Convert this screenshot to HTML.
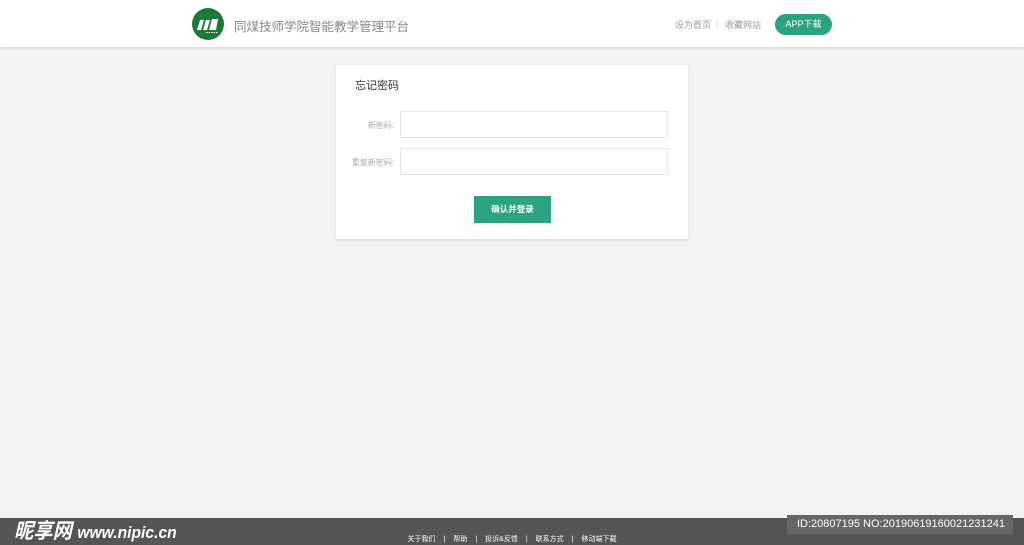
<!DOCTYPE html>
<html><head><meta charset="utf-8"><style>
*{margin:0;padding:0;box-sizing:border-box}
body{width:1024px;height:545px;background:#f2f2f2;font-family:"Liberation Sans","Noto Sans CJK SC",sans-serif;position:relative;overflow:hidden}
.hd{position:absolute;left:0;top:0;width:1024px;height:47px;background:#fff;box-shadow:0 1px 3px rgba(0,0,0,.12)}
.logo{position:absolute;left:192px;top:8px;width:32px;height:32px;border-radius:50%;background:#1d7a35}
.title{position:absolute;left:234px;top:16px;font-size:12.5px;color:#888}
.nav{position:absolute;top:18px;font-size:9px;color:#999}
.btn-app{position:absolute;left:775px;top:14px;width:57px;height:21px;border-radius:11px;background:#2ba383;color:#fff;font-size:9px;text-align:center;line-height:21px}
.card{position:absolute;left:336px;top:65px;width:352px;height:174px;background:#fff;box-shadow:0 1px 3px rgba(0,0,0,.1)}
.card h3{position:absolute;left:19px;top:12px;font-size:11px;font-weight:normal;color:#333}
.lbl{position:absolute;font-size:8px;color:#aaa;text-align:right;width:58px;left:0}
.inp{position:absolute;left:64px;width:268px;height:27px;border:1px solid #e6e6e6}
.sub{position:absolute;left:138px;top:131px;width:77px;height:27px;background:#2ba383;color:#fff;font-size:8.5px;text-align:center;line-height:27px;font-weight:bold}
.ft{position:absolute;left:0;top:518px;width:1024px;height:27px;background:#555}
.fl{position:absolute;left:0;width:1024px;top:534px;text-align:center;font-size:7px;color:#fff;word-spacing:0}
.fl span{margin:0 8px}
</style></head><body>
<div class="hd">
<div class="logo"><svg width="32" height="32" viewBox="0 0 32 32"><path d="M5 22l3-10h4l-3 10zM11 22l3-10h4l-3 10zM17 22l3-11h6l-2 11z" fill="#fff"/><path d="M14 24.5h12" stroke="#fff" stroke-width="1" stroke-dasharray="1.5 1"/></svg></div>
<div class="title">同煤技师学院智能教学管理平台</div>
<div class="nav" style="left:675px">设为首页</div>
<div class="nav" style="left:716px;color:#ccc">|</div>
<div class="nav" style="left:725px">收藏网站</div>
<div class="btn-app">APP下载</div>
</div>
<div class="card">
<h3>忘记密码</h3>
<div class="lbl" style="top:55px">新密码:</div>
<div class="inp" style="top:46px"></div>
<div class="lbl" style="top:92px">重复新密码:</div>
<div class="inp" style="top:83px"></div>
<div class="sub">确认并登录</div>
</div>
<div class="ft">
<div style="position:absolute;left:14px;top:-3px;color:#fff;font-size:21px;font-weight:bold;font-style:italic;transform:scaleX(.92);transform-origin:left">昵享网 <span style="font-size:17px">www.nipic.cn</span></div>
<div style="position:absolute;left:787px;top:-3px;width:226px;height:19px;background:#666;color:#fff;font-size:11px;line-height:19px;padding-left:10px">ID:20807195 NO:20190619160021231241</div>
</div>
<div class="fl">关于我们<span>|</span>帮助<span>|</span>投诉&amp;反馈<span>|</span>联系方式<span>|</span>移动端下载</div>
</body></html>
